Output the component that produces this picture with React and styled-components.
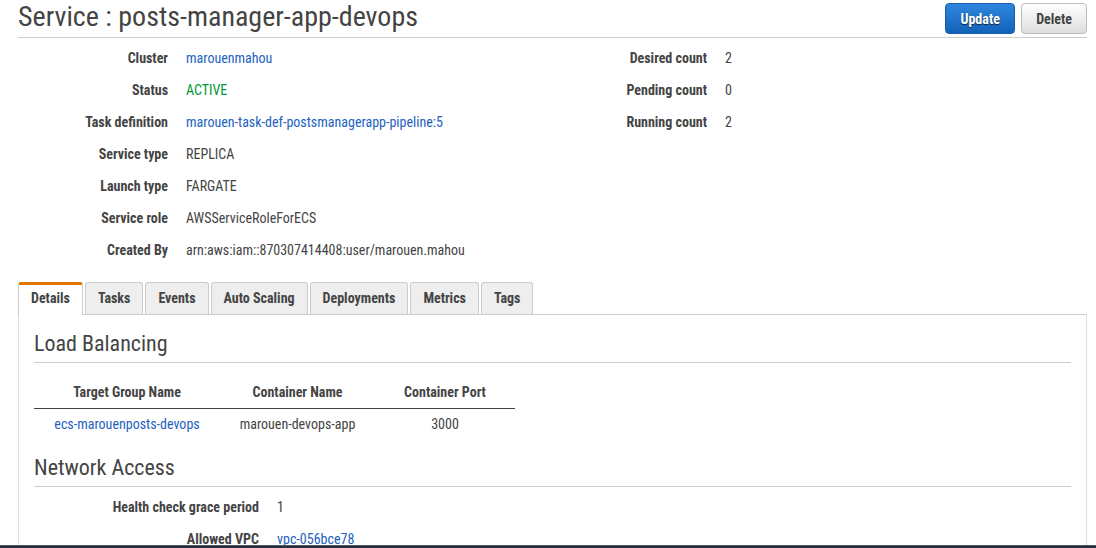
import React, { useState } from "react";
import styled, { createGlobalStyle, css } from "styled-components";

const GlobalStyle = createGlobalStyle`
  *, *::before, *::after { box-sizing: border-box; }
  body {
    margin: 0;
    background: #fff;
    color: #444;
    font-family: "Roboto Condensed", "Liberation Sans Narrow", Roboto, sans-serif;
    font-size: 14px;
    line-height: 20px;
  }
`;

const Page = styled.div`
  display: flex;
  flex-direction: column;
  height: 100vh;
`;

const Content = styled.main`
  flex: 1;
  min-height: 0;
  overflow: hidden;
  padding: 0 9px 0 18px;
`;

const FooterBar = styled.footer`
  flex: none;
  height: 3px;
  background: #232f3e;
  border-top: 1px solid #4b5563;
`;

const Header = styled.header`
  display: flex;
  align-items: center;
  justify-content: space-between;
  height: 38px;
  border-bottom: 1px solid #ccc;
`;

const Title = styled.h1`
  margin: 0;
  padding-bottom: 4px;
  font-size: 28px;
  line-height: 32px;
  font-weight: 400;
  white-space: nowrap;
`;

const Actions = styled.div`
  display: flex;
  gap: 6px;
`;

const Button = styled.button`
  height: 31px;
  padding: 0 14px;
  border: 1px solid #bbb;
  border-radius: 4px;
  background: linear-gradient(#fff, #ddd);
  color: #444;
  font: inherit;
  font-weight: 700;
  cursor: pointer;
  ${({ $primary }) =>
    $primary &&
    css`
      min-width: 70px;
      border-color: #1b5ca8;
      background: linear-gradient(#2f86dd, #1262b8);
      color: #fff;
      text-shadow: 0 1px 1px #123;
    `}
`;

const Summary = styled.section`
  display: grid;
  grid-template-columns: 1fr 1fr;
  column-gap: 9px;
  padding: 4px 0 16px;
`;

const Fields = styled.dl`
  margin: 0;
`;

const FieldRow = styled.div`
  display: grid;
  grid-template-columns: ${({ $labelWidth }) => $labelWidth}px 1fr;
  column-gap: 18px;
  padding: 6px 0;
`;

const Label = styled.dt`
  font-weight: 700;
  text-align: right;
`;

const Value = styled.dd`
  margin: 0;
  color: ${({ $active }) => ($active ? "#093" : "inherit")};
`;

const Link = styled.a`
  color: #1e62be;
  text-decoration: none;
`;

const TabList = styled.div`
  display: flex;
  gap: 2px;
`;

const Tab = styled.button`
  height: 32px;
  padding: 0 12px 2px;
  border: 1px solid #ccc;
  border-bottom: 0;
  border-radius: 3px 3px 0 0;
  background: #eee;
  color: #444;
  font: inherit;
  font-weight: 700;
  cursor: pointer;
  ${({ $selected }) =>
    $selected &&
    css`
      height: 33px;
      margin-bottom: -1px;
      border-top: 3px solid #e07700;
      padding-bottom: 5px;
      background: #fff;
    `}
`;

const Panel = styled.section`
  padding: 13px 15px;
  border: 1px solid #ddd;
  border-top-color: #ccc;
`;

const SectionTitle = styled.h2`
  margin: 0;
  padding: 0 0 2px;
  border-bottom: 1px solid #ccc;
  font-size: 22px;
  line-height: 32px;
  font-weight: 400;
`;

const Table = styled.table`
  margin: 13px 0 12px;
  border-collapse: collapse;
  text-align: center;
  th, td { height: 32px; padding: 0; }
  thead { border-bottom: 1px solid #444; }
`;

const Column = styled.col`
  width: ${({ $width }) => $width}px;
`;

const Network = styled.div`
  padding-top: 4px;
`;

function Field({ label, labelWidth = 150, href, active, children }) {
  return (
    <FieldRow $labelWidth={labelWidth}>
      <Label>{label}</Label>
      <Value $active={active}>{href ? <Link href={href}>{children}</Link> : children}</Value>
    </FieldRow>
  );
}

const tabs = ["Details", "Tasks", "Events", "Auto Scaling", "Deployments", "Metrics", "Tags"];

export default function App() {
  const [selected, setSelected] = useState("Details");
  return (
    <Page>
      <GlobalStyle />
      <Content>
        <Header>
          <Title>Service : posts-manager-app-devops</Title>
          <Actions>
            <Button type="button" $primary>Update</Button>
            <Button type="button">Delete</Button>
          </Actions>
        </Header>
        <Summary>
          <Fields>
            <Field label="Cluster" href="#cluster">marouenmahou</Field>
            <Field label="Status" active>ACTIVE</Field>
            <Field label="Task definition" href="#task">marouen-task-def-postsmanagerapp-pipeline:5</Field>
            <Field label="Service type">REPLICA</Field>
            <Field label="Launch type">FARGATE</Field>
            <Field label="Service role">AWSServiceRoleForECS</Field>
            <Field label="Created By">arn:aws:iam::870307414408:user/marouen.mahou</Field>
          </Fields>
          <Fields>
            <Field label="Desired count">2</Field>
            <Field label="Pending count">0</Field>
            <Field label="Running count">2</Field>
          </Fields>
        </Summary>
        <TabList role="tablist">
          {tabs.map((name) => (
            <Tab
              key={name}
              type="button"
              role="tab"
              aria-selected={name === selected}
              $selected={name === selected}
              onClick={() => setSelected(name)}
            >
              {name}
            </Tab>
          ))}
        </TabList>
        <Panel role="tabpanel">
          <SectionTitle>Load Balancing</SectionTitle>
          <Table>
            <colgroup>
              <Column $width={186} />
              <Column $width={155} />
              <Column $width={140} />
            </colgroup>
            <thead>
              <tr>
                <th scope="col">Target Group Name</th>
                <th scope="col">Container Name</th>
                <th scope="col">Container Port</th>
              </tr>
            </thead>
            <tbody>
              <tr>
                <td><Link href="#target-group">ecs-marouenposts-devops</Link></td>
                <td>marouen-devops-app</td>
                <td>3000</td>
              </tr>
            </tbody>
          </Table>
          <SectionTitle>Network Access</SectionTitle>
          <Network>
            <Fields>
              <Field label="Health check grace period" labelWidth={225}>1</Field>
              <Field label="Allowed VPC" labelWidth={225} href="#vpc">vpc-056bce78</Field>
            </Fields>
          </Network>
        </Panel>
      </Content>
      <FooterBar />
    </Page>
  );
}
